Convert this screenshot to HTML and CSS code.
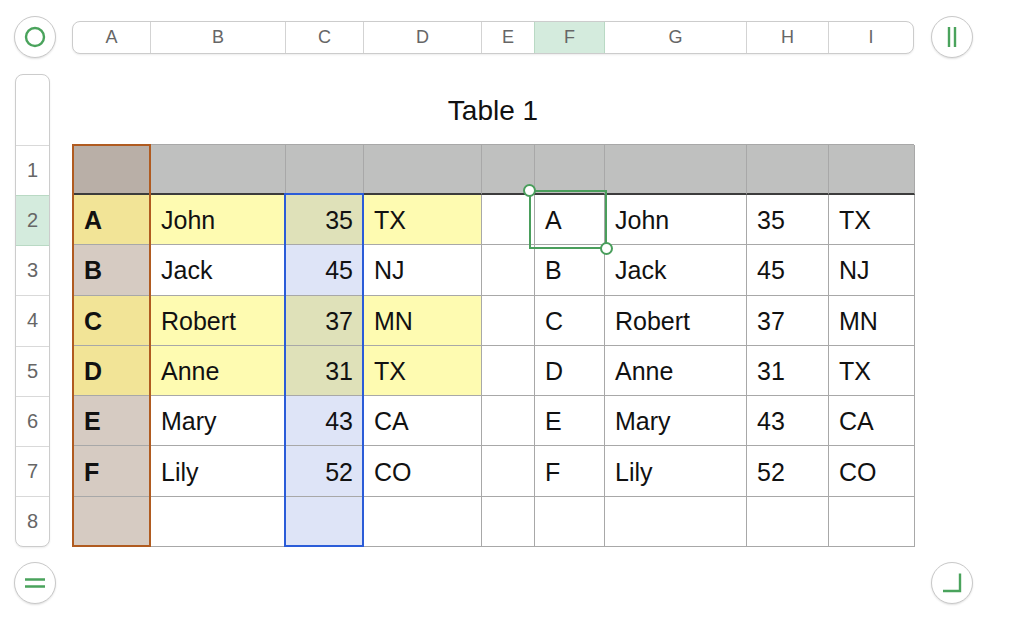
FILE: index.html
```html
<!DOCTYPE html>
<html>
<head>
<meta charset="utf-8">
<link rel="stylesheet" href="styles.css">
</head>
<body>
<div class="page">
  <div class="btn btn-tl">
    <svg width="22" height="22" viewBox="0 0 22 22"><circle cx="11" cy="11" r="9" fill="none" stroke="#4aa35c" stroke-width="2.4"/></svg>
  </div>
  <div class="colbar">
    <div class="ch w-a">A</div>
    <div class="ch w-b">B</div>
    <div class="ch w-c">C</div>
    <div class="ch w-d">D</div>
    <div class="ch w-e">E</div>
    <div class="ch w-f ch-sel">F</div>
    <div class="ch w-g">G</div>
    <div class="ch w-h">H</div>
    <div class="ch w-i">I</div>
  </div>
  <div class="btn btn-tr">
    <svg width="22" height="22" viewBox="0 0 22 22"><path d="M8 1v20M14 1v20" stroke="#4aa35c" stroke-width="2.4" fill="none"/></svg>
  </div>

  <div class="rowbar">
    <div class="rh-top"></div>
    <div class="rh">1</div>
    <div class="rh rh-sel">2</div>
    <div class="rh">3</div>
    <div class="rh">4</div>
    <div class="rh">5</div>
    <div class="rh">6</div>
    <div class="rh">7</div>
    <div class="rh rh-last">8</div>
  </div>

  <div class="title">Table 1</div>

  <div class="tablewrap">
    <div class="grid">
      <div class="c hdr hdr-a"></div><div class="c hdr"></div><div class="c hdr"></div><div class="c hdr"></div><div class="c hdr"></div><div class="c hdr"></div><div class="c hdr"></div><div class="c hdr"></div><div class="c hdr"></div>

      <div class="c ca-y b">A</div><div class="c yel">John</div><div class="c cc-y num">35</div><div class="c yel">TX</div><div class="c"></div><div class="c">A</div><div class="c">John</div><div class="c">35</div><div class="c">TX</div>

      <div class="c ca b">B</div><div class="c">Jack</div><div class="c cc num">45</div><div class="c">NJ</div><div class="c"></div><div class="c">B</div><div class="c">Jack</div><div class="c">45</div><div class="c">NJ</div>

      <div class="c ca-y b">C</div><div class="c yel">Robert</div><div class="c cc-y num">37</div><div class="c yel">MN</div><div class="c"></div><div class="c">C</div><div class="c">Robert</div><div class="c">37</div><div class="c">MN</div>

      <div class="c ca-y b">D</div><div class="c yel">Anne</div><div class="c cc-y num">31</div><div class="c yel">TX</div><div class="c"></div><div class="c">D</div><div class="c">Anne</div><div class="c">31</div><div class="c">TX</div>

      <div class="c ca b">E</div><div class="c">Mary</div><div class="c cc num">43</div><div class="c">CA</div><div class="c"></div><div class="c">E</div><div class="c">Mary</div><div class="c">43</div><div class="c">CA</div>

      <div class="c ca b">F</div><div class="c">Lily</div><div class="c cc num">52</div><div class="c">CO</div><div class="c"></div><div class="c">F</div><div class="c">Lily</div><div class="c">52</div><div class="c">CO</div>

      <div class="c ca"></div><div class="c"></div><div class="c cc"></div><div class="c"></div><div class="c"></div><div class="c"></div><div class="c"></div><div class="c"></div><div class="c"></div>
    </div>
    <div class="sel-a"></div>
    <div class="sel-c"></div>
    <div class="sel-cell">
      <span class="handle h-tl"></span>
      <span class="handle h-br"></span>
    </div>
  </div>

  <div class="btn btn-bl">
    <svg width="22" height="22" viewBox="0 0 22 22"><path d="M1 7.5h20M1 14.5h20" stroke="#4aa35c" stroke-width="2.4" fill="none"/></svg>
  </div>
  <div class="btn btn-br">
    <svg width="22" height="22" viewBox="0 0 22 22"><path d="M19 1.5v17.5H2" stroke="#4aa35c" stroke-width="2.4" fill="none"/></svg>
  </div>
</div>
</body>
</html>
```

FILE: styles.css
```css
* { box-sizing: border-box; }
html, body { margin: 0; padding: 0; background: #ffffff; }
body { font-family: "Liberation Sans", Arial, Helvetica, sans-serif; color: #111; }

.page {
  display: grid;
  grid-template-columns: 72px 842px 1fr;
  grid-template-rows: 74px 70px 403px 1fr;
  width: 1014px;
  height: 630px;
}

.btn {
  width: 42px;
  height: 42px;
  border-radius: 50%;
  border: 1px solid #c9c9c9;
  background: #fff;
  box-shadow: 0 1px 2px rgba(0,0,0,0.12);
  display: flex;
  align-items: center;
  justify-content: center;
}
.btn-tl { grid-column: 1; grid-row: 1; margin: 16px 0 0 14px; }
.btn-tr { grid-column: 3; grid-row: 1; margin: 16px 0 0 17px; }
.btn-bl { grid-column: 1; grid-row: 4; margin: 15px 0 0 14px; }
.btn-br { grid-column: 3; grid-row: 4; margin: 15px 0 0 17px; }

.colbar {
  grid-column: 2; grid-row: 1;
  margin-top: 21px;
  height: 33px;
  border: 1px solid #cccccc;
  border-radius: 8px;
  box-shadow: 0 1px 2px rgba(0,0,0,0.08);
  display: flex;
  overflow: hidden;
  background: #fff;
}
.ch {
  display: flex;
  align-items: center;
  justify-content: center;
  font-size: 18px;
  color: #666;
  border-right: 1px solid #d3d3d3;
  flex: none;
}
.w-a { width: 78px; }
.w-b { width: 135px; }
.w-c { width: 78px; }
.w-d { width: 118px; }
.w-e { width: 53px; }
.w-f { width: 70px; }
.w-g { width: 142px; }
.w-h { width: 82px; }
.w-i { flex: 1; border-right: none; }
.ch-sel { background: #d4ebdd; border-left: 1px solid #b9d9c4; border-right: 1px solid #b9d9c4; margin-left: -1px; width: 71px; }

.rowbar {
  grid-column: 1; grid-row: 2 / span 2;
  margin-left: 15px;
  width: 35px;
  border: 1px solid #cccccc;
  border-radius: 8px;
  box-shadow: 0 1px 2px rgba(0,0,0,0.08);
  display: grid;
  grid-template-rows: 70px repeat(8, 1fr);
  overflow: hidden;
  background: #fff;
}
.rh {
  display: flex;
  align-items: center;
  justify-content: center;
  font-size: 20px;
  color: #666;
  border-top: 1px solid #d9d9d9;
}
.rh-sel { background: #d4ebdd; border-top-color: #b9d9c4; }
.rh-sel + .rh { border-top-color: #b9d9c4; }

.title {
  grid-column: 2; grid-row: 2;
  display: flex;
  align-items: center;
  justify-content: center;
  font-size: 28px;
  color: #111;
  padding-top: 3px;
}

.tablewrap {
  grid-column: 2; grid-row: 3;
  position: relative;
  margin-left: 1px;
}
.grid {
  display: grid;
  grid-template-columns: 77px 135px 78px 118px 53px 70px 142px 82px 86px;
  grid-template-rows: 50px repeat(7, 1fr);
  height: 403px;
  border-top: 1px solid #a8a8a8;
  border-left: 1px solid #a8a8a8;
}
.c {
  border-right: 1px solid #a8a8a8;
  border-bottom: 1px solid #a8a8a8;
  display: flex;
  align-items: center;
  padding: 2px 10px 0;
  font-size: 25px;
  color: #111;
  white-space: nowrap;
}
.hdr { background: #bfc0bf; border-bottom: 2px solid #3c3c3c; }
.hdr-a { background: #b9afa7; }
.b { font-weight: bold; }
.num { justify-content: flex-end; }
.yel { background: #fefbb1; }
.ca { background: #d6cbc2; }
.ca-y { background: #f2e497; }
.cc { background: #dee4f7; }
.cc-y { background: #dfe1b9; }

.sel-a {
  position: absolute;
  left: -1px; top: 0;
  width: 79px; height: 403px;
  border: 2px solid #b05b20;
  pointer-events: none;
}
.sel-c {
  position: absolute;
  left: 211px; top: 49px;
  width: 80px; height: 354px;
  border: 2px solid #2b5cd8;
  pointer-events: none;
}
.sel-cell {
  position: absolute;
  left: 456px; top: 46px;
  width: 78px; height: 59px;
  border: 2px solid #4a9e5c;
}
.handle {
  position: absolute;
  width: 13px; height: 13px;
  border-radius: 50%;
  background: #fff;
  border: 2px solid #4a9e5c;
}
.h-tl { left: -8px; top: -8px; }
.h-br { right: -8px; bottom: -8px; }
```
